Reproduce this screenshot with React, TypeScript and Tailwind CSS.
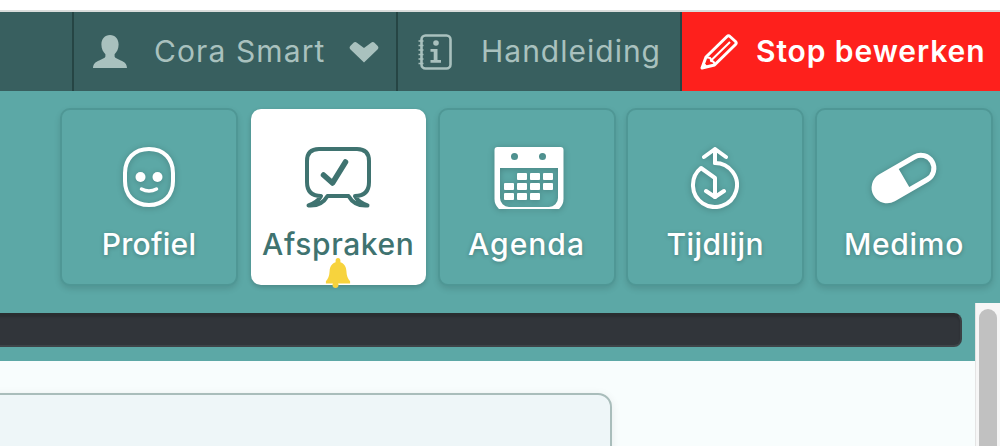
const F = "[font-family:Inter,'Liberation_Sans',sans-serif]";

function Card({ label, active, children, tracking }: { label: string; active?: boolean; children: React.ReactNode; tracking: string }) {
  const base = "relative flex flex-col items-center shrink-0 rounded-[10px]";
  const look = active
    ? "h-[176px] my-[1px] ml-[2px] mr-[1px] w-[175px] bg-white text-[#3f7370] shadow-[0_2px_5px_rgba(0,0,0,0.2)]"
    : "w-[178px] h-[178px] border-2 border-[#4f9795] bg-[#5ca8a6] text-white shadow-[0_3px_6px_rgba(0,0,0,0.12)] [text-shadow:0_1px_4px_rgba(0,0,0,0.25)]";
  return (
    <div className={`${base} ${look}`}>
      <div className={`w-[80px] h-[64px] ${active ? "mt-[36px]" : "mt-[35px]"} ${active ? "" : "drop-shadow-[0_1px_3px_rgba(0,0,0,0.22)]"}`}>{children}</div>
      <div className={`mt-[19px] text-[30px] font-medium leading-[32px] whitespace-nowrap ${tracking}`}>{label}</div>
    </div>
  );
}

export default function App() {
  return (
    <div className={`relative w-[1000px] h-[446px] overflow-hidden bg-white flex flex-col ${F}`}>
      <div className="h-[10px] shrink-0 bg-white" />
      <div className="h-[2px] shrink-0 bg-[#d9dcdb]" />
      {/* top bar */}
      <div className="h-[79px] shrink-0 flex bg-[#385f5f]">
        <div className="w-[72px] shrink-0" />
        <div className="w-[324px] shrink-0 border-l-2 border-[#264544] flex items-center text-[#a9c1be] text-[30px]">
          <svg width="36" height="33" viewBox="0 0 36 33" className="ml-[18px] -mt-[1px] shrink-0">
            <path d="M18 0c5.200 0 8.600 4 8.600 9.600 0 4.200-1.700 7.600-4 9.600v2.400c0 1.400 2.600 2.300 6.200 3.800 3.600 1.500 6 3 6.200 7.600H1c.2-4.600 2.600-6.100 6.200-7.600 3.600-1.500 6.200-2.400 6.200-3.800v-2.400c-2.300-2-4-5.400-4-9.600C9.400 4 12.800 0 18 0z" fill="#a9c1be" />
          </svg>
          <span className="ml-[26px] whitespace-nowrap w-[195px] shrink-0 tracking-[1.1px]">Cora Smart</span>
          <svg width="30" height="22" viewBox="0 0 30 22" className="shrink-0">
            <path d="M15 21.500 1.500 8.500c-1.200-1.200-1.200-2.600 0-3.800l3-3c1-1 2.400-1 3.400 0L15 7l7.100-5.300c1-1 2.400-1 3.400 0l3 3c1.200 1.200 1.200 2.600 0 3.800z" fill="#a9c1be" />
          </svg>
        </div>
        <div className="w-[284px] shrink-0 border-l-2 border-[#264544] flex items-center text-[#a9c1be] text-[30px]">
          <svg width="34" height="36" viewBox="0 0 34 36" className="ml-[20px] shrink-0" fill="none" stroke="#a9c1be">
            <rect x="3.500" y="1.500" width="29" height="33" rx="4" strokeWidth="2.600" />
            <path d="M0.500 7h5M0.500 11.500h5M0.500 16h5M0.500 20.500h5M0.500 25h5M0.500 29.500h5" strokeWidth="1.500" />
            <circle cx="18" cy="9" r="2.800" fill="#a9c1be" stroke="none" />
            <path d="M12.500 15h7v11h3.500v2.800H12.500V26h3.200v-8.200h-3.200z" fill="#a9c1be" stroke="none" />
          </svg>
          <span className="ml-[29px] whitespace-nowrap tracking-[1px]">Handleiding</span>
        </div>
        <div className="flex-1 border-l-2 border-[#264544] flex items-center bg-[#fe201c] text-white text-[30px] font-semibold">
          <svg width="38" height="36" viewBox="0 0 38 36" className="ml-[18px] shrink-0" fill="none" stroke="#fff" strokeWidth="3" strokeLinejoin="round">
            <path d="M2 34 6 23 27 2.500c1-1 2-1 3 0l5.500 5c1 1 1 2 0 3L14.500 31z" />
            <path d="M7 23.500c2.500 0 4 0 4 3.500 3 0 3.500 1.500 3.500 4M11 26.500 30 8" strokeWidth="2" />
            <path d="M1.500 34.500 3.500 28.500 7.500 33z" fill="#fff" strokeWidth="1" />
          </svg>
          <span className="ml-[18px] whitespace-nowrap tracking-[0.9px]">Stop bewerken</span>
        </div>
      </div>
      {/* teal section */}
      <div className="h-[270px] shrink-0 bg-[#5ca8a6] flex flex-col">
        <div className="flex gap-[10.75px] pl-[60px] pt-[17px]">
          <Card label="Profiel" tracking="tracking-[0.3px]">
            <svg width="80" height="64" viewBox="0 0 80 64" fill="none">
              <path d="M40 4C25 4 16 14 16 28v8C16 50 25 60 40 60S64 50 64 36v-8C64 14 55 4 40 4z" stroke="#fff" strokeWidth="4" />
              <circle cx="31.500" cy="32" r="5" fill="#fff" />
              <circle cx="48.500" cy="32" r="5" fill="#fff" />
              <path d="M32.500 44q7.500 4 15 0" stroke="#fff" strokeWidth="3.500" strokeLinecap="round" />
            </svg>
          </Card>
          <div className="relative shrink-0">
            <Card label="Afspraken" active tracking="tracking-[0.6px]">
              <svg width="80" height="64" viewBox="0 0 80 64" fill="none" stroke="#3f7370" strokeLinecap="round" strokeLinejoin="round">
                <path d="M21 4h38q12 0 12 12v21q0 14-14 14q3 6 12.500 9.500q-13 1-19-9.500h-21q-6 10.500-19 9.500q9.500-3.500 12.500-9.500q-14 0-14-14v-21q0-12 12-12z" strokeWidth="4" />
                <path d="M25.500 30l9 8 13-21" strokeWidth="5.500" />
              </svg>
            </Card>
            <svg width="26" height="30" viewBox="0 0 26 30" className="absolute left-[76px] top-[150px]">
              <path d="M13 0c1.500 0 2.400 1.100 2.400 2.500v1.800c3.800 1.200 5.800 4.600 6 8.800.2 4.800 1.400 7.800 3.700 10.200v2.200H.900v-2.200c2.300-2.400 3.500-5.400 3.700-10.200.2-4.200 2.200-7.600 6-8.800V2.500C10.600 1.100 11.500 0 13 0z" fill="#f7d33d" />
              <circle cx="10.500" cy="27" r="3" fill="#f7d33d" />
            </svg>
          </div>
          <Card label="Agenda" tracking="tracking-[1px]">
            <svg width="80" height="64" viewBox="0 0 80 64">
              <g transform="translate(2 0)">
                <path fillRule="evenodd" fill="#fff" d="M8.500 2h63a3 3 0 0 1 3 3v49a13 13 0 0 1-13 13h-43a13 13 0 0 1-13-13V5a3 3 0 0 1 3-3zM11 23v30a9 9 0 0 0 9 9h40a9 9 0 0 0 9-9V23zM25.500 8a3.500 3.500 0 1 0 0 7 3.500 3.500 0 0 0 0-7zM53.500 8a3.500 3.500 0 1 0 0 7 3.500 3.500 0 0 0 0-7z" />
                {[[28, 28], [41, 28], [54, 28], [15, 38], [28, 38], [41, 38], [54, 38], [15, 48], [28, 48], [41, 48]].map(([x, y], i) => (
                  <rect key={i} x={x} y={y} width="10" height="7" rx="1" fill="#fff" />
                ))}
              </g>
            </svg>
          </Card>
          <Card label="Tijdlijn" tracking="tracking-[0.45px]">
            <svg width="80" height="64" viewBox="0 0 80 64" fill="none" stroke="#fff" strokeWidth="4" strokeLinecap="round" strokeLinejoin="round">
              <path d="M40 18A22 22 0 1 1 26 23L40 33V52" />
              <path d="M40 18V4M29 12l11-8 11 8M31 46l9 6 9-6" />
            </svg>
          </Card>
          <Card label="Medimo" tracking="tracking-[0.7px]">
            <svg width="80" height="64" viewBox="0 0 80 64">
              <g transform="translate(40 33) rotate(-30)">
                <path fillRule="evenodd" fill="#fff" d="M-19.500-15.500H19.500a15.500 15.500 0 0 1 0 31H-19.500a15.500 15.500 0 0 1 0-31zM0-10.500V10.500H19.500a10.500 10.500 0 0 0 0-21z" />
              </g>
            </svg>
          </Card>
        </div>
        <div className="mt-[27px] ml-[-20px] w-[982px] h-[34px] shrink-0 rounded-[8px] bg-[#31353a] border-2 border-t-[#2a2e30] border-x-[#3a4044] border-b-[#3e4448] shadow-[inset_0_2px_2px_rgba(0,0,0,0.15)]" />
      </div>
      {/* content */}
      <div className="flex-1 bg-[#f8fdfd] pt-[32px]">
        <div className="ml-[-20px] w-[632px] h-[80px] rounded-tr-[14px] border-2 border-[#a9bdbb] bg-[#eef6f8] shadow-[0_2px_10px_rgba(0,0,0,0.08)]" />
      </div>
      {/* scrollbar */}
      <div className="absolute right-0 bottom-0 top-[303px] w-[25px] bg-[#f6f6f6] border-l border-[#e4e4e4] flex justify-center pt-[6px]">
        <div className="w-[18px] h-[200px] rounded-t-full bg-[#c1c1c1]" />
      </div>
    </div>
  );
}
